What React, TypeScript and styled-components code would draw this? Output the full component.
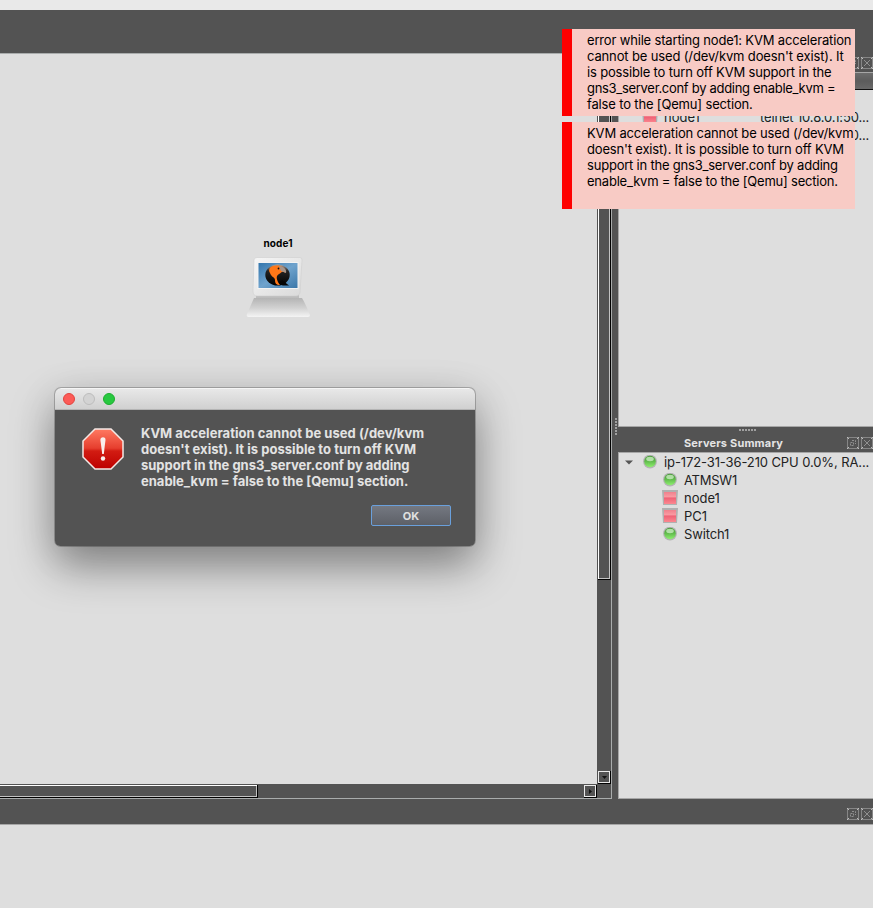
import React from 'react';
import styled, { createGlobalStyle } from 'styled-components';

const Global = createGlobalStyle`
  * { box-sizing: border-box; }
  body { margin: 0; background: #dedede; font-family: Inter, "Liberation Sans", sans-serif; }
`;

const Page = styled.div`
  position: relative;
  width: 873px;
  height: 908px;
  overflow: hidden;
  background: #dedede;
  display: grid;
  grid-template-rows: 10px 43px 746px 26px 1fr;
  color: #222;
`;
const WindowStrip = styled.div`background: #e9e9e9;`;
const Toolbar = styled.div`background: #535353;`;
const Main = styled.div`
  display: grid;
  grid-template-columns: 612px 6px 255px;
  min-height: 0;
`;
const Splitter = styled.div<{ $vertical?: boolean }>`
  background: #535353;
  display: flex;
  align-items: center;
  justify-content: center;
  padding-left: ${p => (p.$vertical ? 2 : 4)}px;
  padding-top: ${p => (p.$vertical ? 2 : 0)}px;
`;
const CanvasFrame = styled.div`
  display: grid;
  grid-template-columns: 597px 14px;
  grid-template-rows: 730px 14px;
  border: solid #a9acac;
  border-width: 1px 1px 1px 0;
`;
const Canvas = styled.div`background: #dedede; position: relative;`;
const Track = styled.div<{ $row?: boolean }>`
  background: #535353;
  display: flex;
  flex-direction: ${p => (p.$row ? 'row' : 'column')};
  justify-content: space-between;
  align-items: stretch;
  padding: ${p => (p.$row ? '1px 0 0 0' : '0 0 0 1px')};
`;
const Corner = styled.div`background: #535353;`;
const Handle = styled.div<{ $row?: boolean }>`
  ${p => (p.$row ? 'width: 258px' : 'height: 526px')};
  border: solid #000;
  border-width: 0 1px 1px 0;
  box-shadow: ${p => (p.$row ? 'inset 0 1px #fff' : 'inset 1px 1px #fff')}, inset -1px -1px #c2c2c2;
`;
const ArrowButton = styled.div`
  width: 13px;
  height: 13px;
  border: solid #000;
  border-width: 0 1px 1px 0;
  box-shadow: inset 0 0 0 1px #e9e9e9;
  display: flex;
  align-items: center;
  justify-content: center;
  svg { display: block; }
`;
const Side = styled.div`
  display: grid;
  grid-template-rows: 19px 355px 6px 19px 347px;
  background: #535353;
  min-width: 0;
`;
const DockTitle = styled.div`
  background: #535353;
  color: #e4e4e4;
  font-weight: 700;
  font-size: 11px;
  letter-spacing: 0.18px;
  line-height: 19px;
  display: grid;
  grid-template-columns: 1fr 26px;
  align-items: center;
  span { text-align: center; padding: 1px 0 0 2px; }
`;
const DockIcons = styled.div`display: flex; gap: 2px; svg { display: block; flex: none; }`;
const Tree = styled.div`
  border: 1px solid #a6a6a6;
  border-right: 0;
  background: #dedede;
  overflow: hidden;
  position: relative;
`;
const TreeHeader = styled.div`
  height: 17px;
  background: linear-gradient(#6c6c6c, #5c5c5c 50%, #696969);
  border-bottom: 1px solid #111;
`;
const TreeRow = styled.div<{ $depth: number }>`
  height: 18px;
  display: flex;
  align-items: center;
  padding-left: ${p => p.$depth}px;
  font-size: 13px;
  white-space: nowrap;
  svg { flex: none; display: block; }
`;
const RowName = styled.span<{ $w?: number; $ls?: number; $gap?: number }>`
  margin-left: ${p => p.$gap ?? 6}px;
  width: ${p => (p.$w ? p.$w + 'px' : 'auto')};
  letter-spacing: ${p => p.$ls ?? 0}px;
`;
const HeaderGap = styled.div`height: 18px;`;
const BottomDock = styled.div`
  background: #535353;
  border-bottom: 1px solid #a6a6a6;
  display: flex;
  justify-content: flex-end;
  align-items: center;
  padding: 5px 0 0 0;
`;
const NodeItem = styled.div`
  position: absolute;
  left: 246px;
  top: 182px;
  width: 64px;
  text-align: center;
  font-size: 10px;
  font-weight: 700;
  line-height: 14px;
  color: #000;
  letter-spacing: 0.12px;
  svg { display: block; margin-top: 5px; }
`;
const Notices = styled.div`
  position: absolute;
  left: 562px;
  top: 29px;
  display: flex;
  flex-direction: column;
  gap: 6px;
`;
const Notice = styled.div`
  width: 293px;
  height: 87px;
  background: #f8cbc5;
  border-left: 10px solid #fe0000;
  padding: 3px 0 0 15px;
  color: #000;
  font-size: 13px;
  line-height: 16px;
`;
const Line = styled.div<{ $ls: number }>`
  white-space: nowrap;
  letter-spacing: ${p => p.$ls}px;
`;
const Dialog = styled.div`
  position: absolute;
  left: 55px;
  top: 388px;
  width: 420px;
  height: 158px;
  border-radius: 6px 6px 5px 5px;
  background: #535353;
  overflow: hidden;
`;
const DialogShadow = styled.div`
  position: absolute;
  left: 55px;
  top: 388px;
  width: 420px;
  height: 158px;
  border-radius: 6px;
  box-shadow: 0 0 0 1px rgba(0,0,0,.22), 0 20px 44px rgba(0,0,0,.4), 0 6px 44px rgba(0,0,0,.08);
`;
const TitleBar = styled.div`
  height: 22px;
  background: linear-gradient(#e8e8e8, #d0d0d0);
  border-top: 1px solid #f5f5f5;
  border-bottom: 1px solid #b4b4b4;
  padding-left: 8px;
  display: flex;
  gap: 8px;
  align-items: center;
`;
const Light = styled.span<{ $c: string; $b: string }>`
  width: 12px;
  height: 12px;
  border-radius: 50%;
  background: ${p => p.$c};
  border: 1px solid ${p => p.$b};
`;
const DialogBody = styled.div`
  display: flex;
  padding: 15px 0 0 27px;
  gap: 17px;
  color: #e3e3e3;
  font-weight: 700;
  font-size: 13px;
  line-height: 16px;
  svg { display: block; margin-top: 3px; flex: none; }
`;
const DialogFooter = styled.div`
  display: flex;
  justify-content: flex-end;
  padding: 16px 24px 0 0;
`;
const OkButton = styled.button`
  width: 80px;
  height: 21px;
  border: 1px solid #6aa0dc;
  border-radius: 2px;
  background: linear-gradient(#747881, #5d6067);
  color: #e0e0e0;
  font: 700 11px/18px Inter, sans-serif;
  padding: 1px 0 0;
`;

const IconFrame = () => (
  <>
    <path d="M1 .5H11M1 11.500H11M.5 1V11M11.500 1V11" stroke="#868686" />
    <path d="M0 .5h1M11 .5h1M0 11.500h1M11 11.500h1M1 1.500h1M10 1.500h1M1 10.500h1M10 10.500h1" stroke="#bdbdbd" />
  </>
);
const FloatIcon = () => (
  <svg width="12" height="12" viewBox="0 0 12 12" fill="none">
    <IconFrame />
    <path d="M5 3.500H8.500V7" stroke="#909090" strokeDasharray="2 1" />
    <path d="M3.500 5.500H6.500V8.500H3.500z" stroke="#909090" strokeDasharray="2 1" />
  </svg>
);
const CloseIcon = () => (
  <svg width="12" height="12" viewBox="0 0 12 12" fill="none">
    <IconFrame />
    <path d="M3 3L9 9M9 3L3 9" stroke="#909090" />
  </svg>
);
const GreenDot = () => (
  <svg width="14" height="14" viewBox="0 0 14 14">
    <defs>
      <linearGradient id="gd" x2="0" y2="1"><stop stopColor="#439832" /><stop offset=".45" stopColor="#5eb84a" /><stop offset="1" stopColor="#8ff070" /></linearGradient>
    </defs>
    <circle cx="7" cy="6.500" r="6.900" fill="#b3b3b3" />
    <circle cx="7" cy="6.500" r="5.800" fill="url(#gd)" />
    <ellipse cx="7" cy="4" rx="3.800" ry="2.200" fill="#d0f0c8" opacity=".75" />
  </svg>
);
const RedSquare = () => (
  <svg width="16" height="16" viewBox="0 0 16 16">
    <defs>
      <linearGradient id="rs" x2="0" y2="1"><stop stopColor="#f0808c" /><stop offset=".4" stopColor="#f99aa2" /><stop offset=".5" stopColor="#ef6276" /><stop offset="1" stopColor="#fb8890" /></linearGradient>
    </defs>
    <path d="M0 0H16L15 15H1z" fill="#b0b0b0" />
    <rect x="2" y="2" width="12" height="12" fill="url(#rs)" />
  </svg>
);
const Caret = () => (
  <svg width="8" height="5" viewBox="0 0 8 5"><path d="M0 .5H8L4 4.500z" fill="#555" /></svg>
);
const Dots = ({ vertical }: { vertical?: boolean }) => (
  <svg width={vertical ? 2 : 18} height={vertical ? 18 : 2}>
    {[0, 3, 6, 9, 12, 15].map(n => (
      <rect key={n} x={vertical ? 0 : n} y={vertical ? n : 0} width="2" height="2" fill="#a0a0a0" />
    ))}
  </svg>
);
const Computer = () => (
  <svg width="64" height="62" viewBox="246 256 64 62">
    <defs>
      <linearGradient id="cb" x2="0" y2="1"><stop stopColor="#b4b4b4" /><stop offset=".5" stopColor="#d0d0d0" /><stop offset="1" stopColor="#f4f4f4" /></linearGradient>
      <linearGradient id="cm" x2="1" y2="1"><stop stopColor="#f6f6f6" /><stop offset="1" stopColor="#dadada" /></linearGradient>
      <linearGradient id="cs" x2="1" y2="1"><stop stopColor="#3476ad" /><stop offset=".5" stopColor="#6fa3cd" /><stop offset="1" stopColor="#3b77a9" /></linearGradient>
      <linearGradient id="qe" x2="0" y2="1"><stop stopColor="#b8aaa0" /><stop offset=".3" stopColor="#252525" /><stop offset="1" stopColor="#000" /></linearGradient>
    </defs>
    <path d="M254 299H302C305 304 307 309 310 316Q310 318 308 318H248Q246 317 247 315Z" fill="url(#cb)" />
    <path d="M256 296H299V299H256z" fill="#bdbdbd" />
    <path d="M257 258.500H300Q302 258.500 302 261L300 294Q299 297 296 297H257Q253 297 253 292L254 261Q254 258.500 257 258.500Z" fill="url(#cm)" stroke="#cecece" strokeWidth=".6" />
    <rect x="257.500" y="263" width="41" height="27" fill="#f3f3f3" />
    <rect x="258.500" y="264" width="39" height="25" fill="url(#cs)" />
    <ellipse cx="277.500" cy="276" rx="12.200" ry="10.500" fill="url(#qe)" />
    <path d="M282 281L289 286.500H283L277 285z" fill="#050505" />
    <path d="M270 274C267 269 272 266 278 266.500C283 267 286 270 285.500 274C282 271 281 274 279 275C275 277 277 282 280 286C276 286 275 284 275 281C275 278 271 278 270 274Z" fill="#ff7718" />
    <path d="M279 267C284 267 287 271 286 274L281 272z" fill="#a5948a" />
    <circle cx="278.500" cy="269.500" r=".9" fill="#111" />
  </svg>
);
const StopSign = () => (
  <svg width="42" height="42" viewBox="0 0 42 42">
    <defs>
      <linearGradient id="st" x2="0" y2="1"><stop stopColor="#ff7a62" /><stop offset=".48" stopColor="#e63e2e" /><stop offset=".55" stopColor="#d21c12" /><stop offset="1" stopColor="#bd0000" /></linearGradient>
    </defs>
    <path d="M13 1H29L41 13V29L29 41H13L1 29V13Z" fill="url(#st)" stroke="#f4e9e6" strokeWidth="1.500" />
    <path d="M18.400 12Q18.400 9.300 21 9.300Q23.600 9.300 23.500 12L21.800 26H20.200Z" fill="#f9eeeb" />
    <circle cx="21" cy="30.500" r="2.200" fill="#f9eeeb" />
  </svg>
);

const firstNotice: [string, number][] = [
  ['error while starting node1: KVM acceleration', -0.17],
  ["cannot be used (/dev/kvm doesn't exist). It", -0.14],
  ['is possible to turn off KVM support in the', -0.17],
  ['gns3_server.conf by adding enable_kvm =', -0.3],
  ['false to the [Qemu] section.', -0.16],
];
const secondNotice: [string, number][] = [
  ['KVM acceleration cannot be used (/dev/kvm', -0.16],
  ["doesn't exist). It is possible to turn off KVM", -0.17],
  ['support in the gns3_server.conf by adding', -0.21],
  ['enable_kvm = false to the [Qemu] section.', -0.21],
];
const dialogLines: [string, number][] = [
  ['KVM acceleration cannot be used (/dev/kvm', 0.03],
  ["doesn't exist). It is possible to turn off KVM", 0.04],
  ['support in the gns3_server.conf by adding', -0.01],
  ['enable_kvm = false to the [Qemu] section.', 0],
];
const Lines = ({ items }: { items: [string, number][] }) => (
  <div>{items.map(([t, ls]) => <Line key={t} $ls={ls}>{t}</Line>)}</div>
);

export default function App() {
  return (
    <>
      <Global />
      <Page>
        <WindowStrip />
        <Toolbar />
        <Main>
          <CanvasFrame>
            <Canvas>
              <NodeItem>node1<Computer /></NodeItem>
            </Canvas>
            <Track>
              <Handle />
              <ArrowButton><svg width="5" height="3"><path d="M0 0H5L2.500 3z" fill="#111" /></svg></ArrowButton>
            </Track>
            <Track $row>
              <Handle $row />
              <ArrowButton><svg width="3" height="5"><path d="M0 0V5L3 2.500z" fill="#111" /></svg></ArrowButton>
            </Track>
            <Corner />
          </CanvasFrame>
          <Splitter $vertical><Dots vertical /></Splitter>
          <Side>
            <DockTitle><span /><DockIcons><FloatIcon /><CloseIcon /></DockIcons></DockTitle>
            <Tree>
              <TreeHeader />
              <HeaderGap />
              <TreeRow $depth={23}><RedSquare /><RowName $w={90}>node1</RowName><RowName $ls={-0.15}>telnet 10.8.0.1:50...</RowName></TreeRow>
              <TreeRow $depth={23}><RedSquare /><RowName $w={90}>PC1</RowName><RowName $ls={-0.15}>telnet 10.8.0.1:50...</RowName></TreeRow>
            </Tree>
            <Splitter><Dots /></Splitter>
            <DockTitle><span>Servers Summary</span><DockIcons><FloatIcon /><CloseIcon /></DockIcons></DockTitle>
            <Tree>
              <TreeRow $depth={6}><Caret /><RowName $w={4} /><GreenDot /><RowName $gap={7} $ls={-0.11}>ip-172-31-36-210 CPU 0.0%, RA...</RowName></TreeRow>
              <TreeRow $depth={44}><GreenDot /><RowName $gap={7} $ls={-0.25}>ATMSW1</RowName></TreeRow>
              <TreeRow $depth={43}><RedSquare /><RowName>node1</RowName></TreeRow>
              <TreeRow $depth={43}><RedSquare /><RowName>PC1</RowName></TreeRow>
              <TreeRow $depth={44}><GreenDot /><RowName $gap={7} $ls={-0.15}>Switch1</RowName></TreeRow>
            </Tree>
          </Side>
        </Main>
        <BottomDock><DockIcons><FloatIcon /><CloseIcon /></DockIcons></BottomDock>
        <div />
        <Notices>
          <Notice><Lines items={firstNotice} /></Notice>
          <Notice><Lines items={secondNotice} /></Notice>
        </Notices>
        <DialogShadow />
        <Dialog>
          <TitleBar>
            <Light $c="#fc5b57" $b="#e0443e" />
            <Light $c="#d3d3d3" $b="#bcbcbc" />
            <Light $c="#28c840" $b="#1dad2e" />
          </TitleBar>
          <DialogBody>
            <StopSign />
            <Lines items={dialogLines} />
          </DialogBody>
          <DialogFooter><OkButton>OK</OkButton></DialogFooter>
        </Dialog>
      </Page>
    </>
  );
}
